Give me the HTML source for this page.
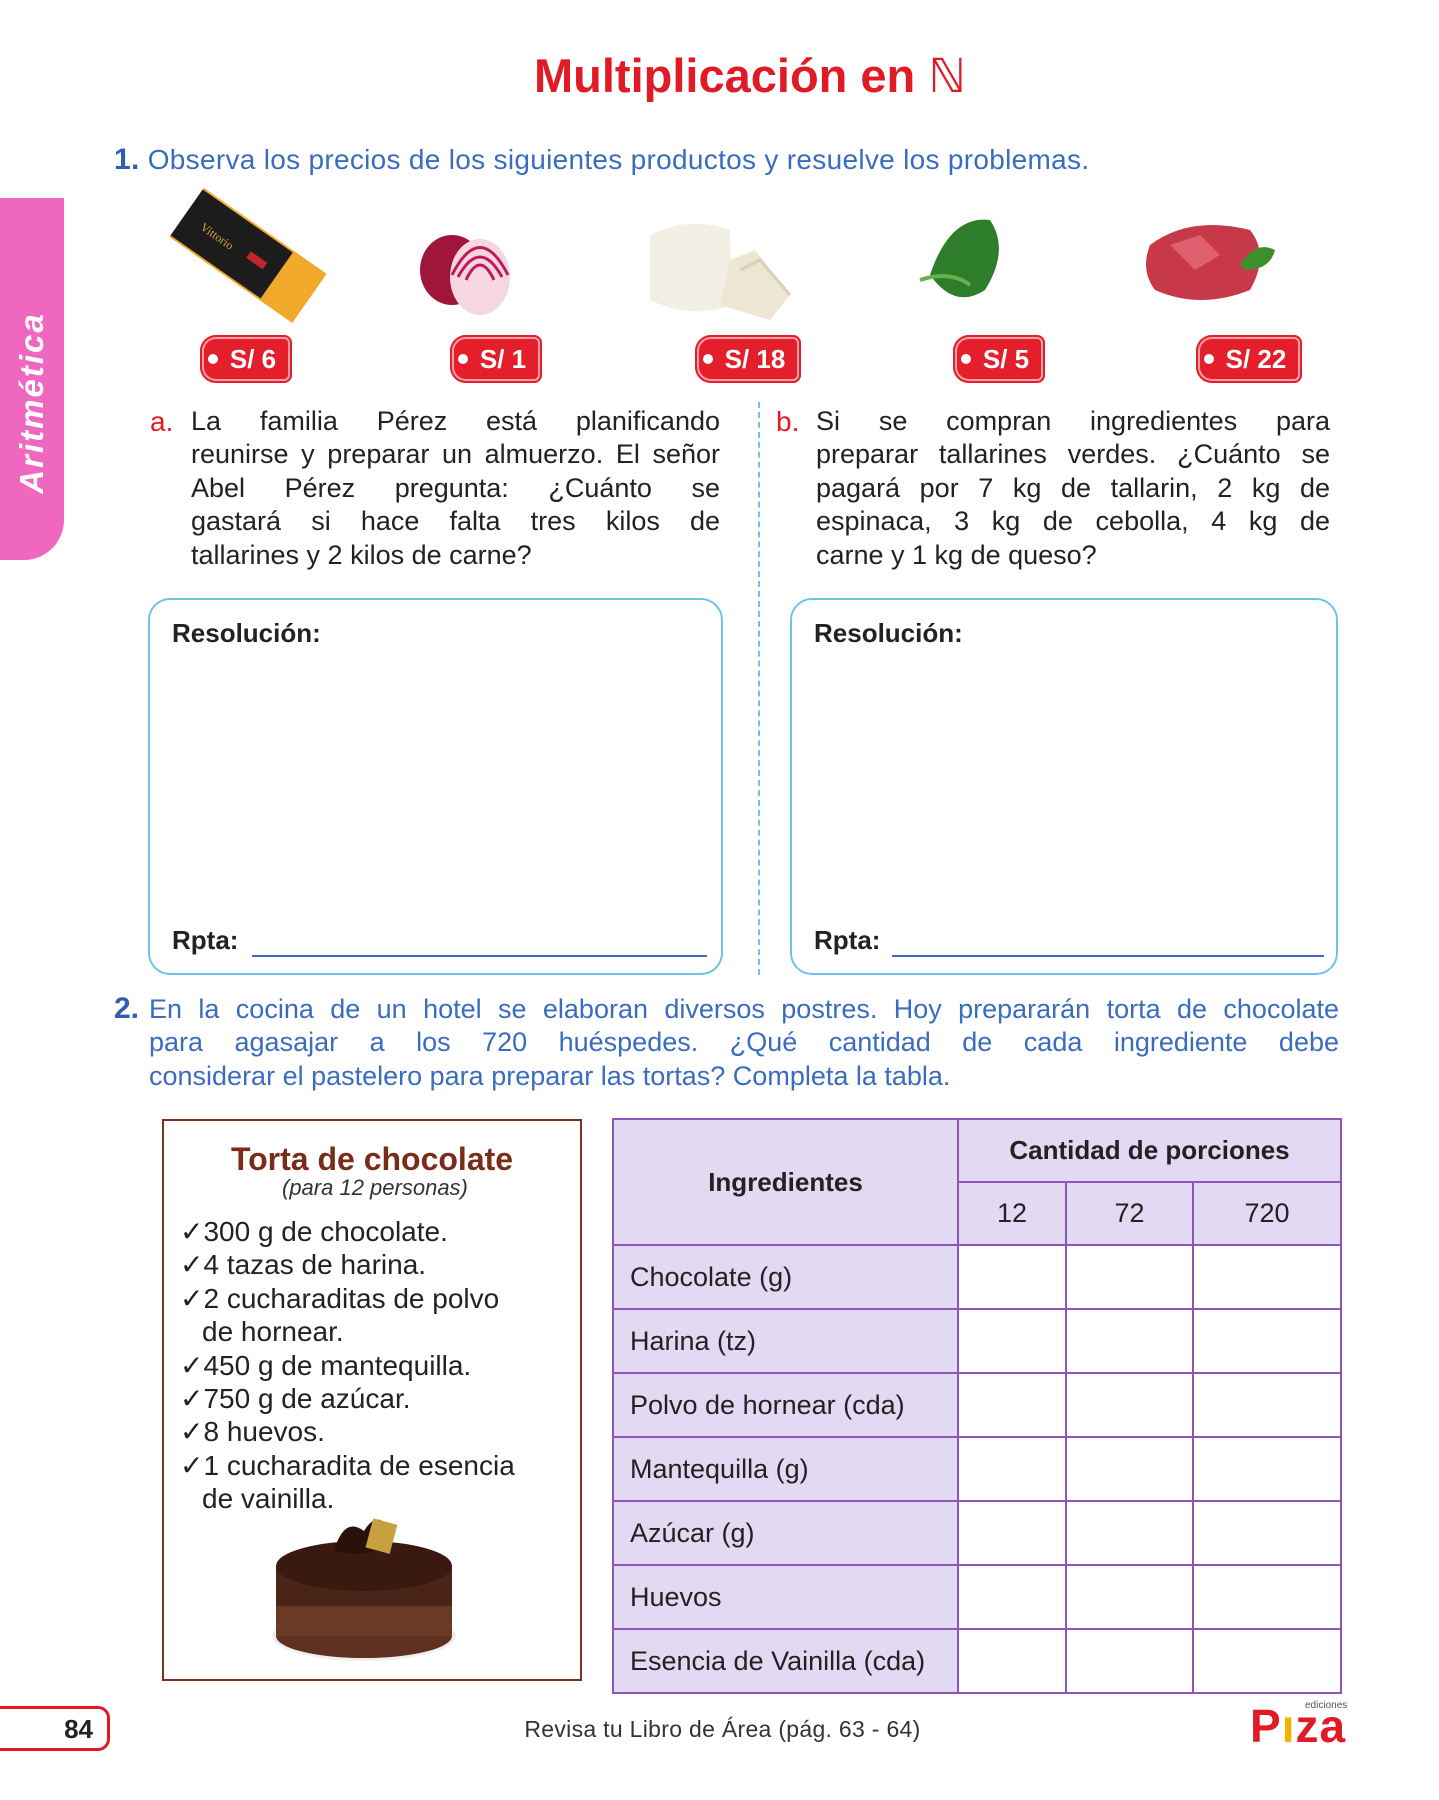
<!DOCTYPE html>
<html><head><meta charset="utf-8">
<style>
*{margin:0;padding:0;box-sizing:border-box}
body{width:1439px;height:1800px;background:#fff;position:relative;overflow:hidden;font-family:"Liberation Sans","DejaVu Sans",sans-serif;color:#222}
.abs{position:absolute}
.title{left:0;width:1500px;text-align:center;top:48px;font-size:47px;font-weight:bold;color:#e11b25}
.blue{color:#3a6cc0}
.num{font-weight:bold;color:#2f5fb3}
.q1{left:114px;top:143px;font-size:28px;letter-spacing:0.3px}
.tab{left:0;top:198px;width:64px;height:362px;background:#f067c0;border-radius:0 0 40px 0}
.tab span{position:absolute;left:32px;top:205px;transform:translate(-50%,-50%) rotate(-90deg);color:#fff;font-size:33px;font-weight:bold;font-style:italic;white-space:nowrap;letter-spacing:2px}
.tag{height:48px;width:92px;background:#e41e2b;border-radius:16px 8px 8px 16px;color:#fff;font-weight:bold;font-size:26px;line-height:48px;text-align:center;padding-left:14px;box-shadow:inset 0 0 0 2px #e41e2b,inset 0 0 0 4px #f7a0a6}
.tag:before{content:"";position:absolute;left:8px;top:19px;width:10px;height:10px;border-radius:50%;background:#fff}
.para{font-size:27px;line-height:33.4px;color:#222}
.para span,.q2 span{display:block;text-align:justify;text-align-last:justify;white-space:nowrap}
.para span.l,.q2 span.l{text-align-last:left}
.lab{font-size:28px;color:#e11b25;position:absolute}
.box{border:2.5px solid #6cc5e6;border-radius:22px;height:377px}
.box b{position:absolute;left:22px;font-size:26px;color:#222}
.line{position:absolute;height:2px;background:#3a6cc0}
.q2{left:149px;top:993px;width:1190px;font-size:27px;line-height:33.4px}
.recipe{left:162px;top:1119px;width:420px;height:562px;border:2.5px solid #7a3422}
.recipe h3{position:absolute;left:0;width:100%;top:20px;text-align:center;color:#7a2c1a;font-size:32px}
.recipe .sub{position:absolute;left:118px;top:54px;font-style:italic;font-size:22px;color:#333}
.recipe ul{position:absolute;left:16px;top:94px;list-style:none;font-size:28px;line-height:33.4px;color:#222;white-space:nowrap}
.recipe li{padding-left:22px;text-indent:-22px}
table{position:absolute;left:612px;top:1118px;border-collapse:collapse;font-size:27px}
td{border:2.5px solid #8d55b8;padding:0}
.h{background:#e2d9f3;}
</style></head><body>
<div class="abs title">Multiplicación en <span style="font-family:'Liberation Serif',serif;font-weight:normal">ℕ</span></div>
<div class="abs q1 blue"><span class="num" style="font-size:30px">1.</span> Observa los precios de los siguientes productos y resuelve los problemas.</div>
<div class="abs tab"><span>Aritmética</span></div>

<svg class="abs" style="left:140px;top:185px" width="1220" height="150">
 <g transform="translate(10,10) rotate(35 80 60)"><rect x="20" y="20" width="150" height="60" fill="#f1a92b"/><rect x="20" y="22" width="110" height="56" fill="#1c1c1c"/><rect x="95" y="45" width="20" height="8" fill="#c0262b"/><text x="40" y="56" fill="#d4a43a" font-size="12" font-family="Liberation Serif">Vittorio</text></g>
 <g><ellipse cx="312" cy="85" rx="32" ry="35" fill="#a0163b"/><ellipse cx="340" cy="92" rx="30" ry="38" fill="#f6d7e1"/><path d="M318 92 q22 -40 44 0 M326 95 q14 -30 28 0 M312 90 q28 -55 56 0" stroke="#c2185b" stroke-width="3" fill="none"/></g>
 <g><path d="M510 50 q40 -20 80 -5 l2 75 q-40 15 -82 -5z" fill="#f2efe4"/><path d="M590 75 l25 -10 l35 45 l-20 25 l-50 -15z" fill="#ece6d3"/><path d="M600 85 l20 -10 l30 35" stroke="#d8d0b8" stroke-width="3" fill="none"/></g>
 <g><path d="M790 90 q20 -60 60 -55 q20 30 -5 70 q-30 20 -55 -15z" fill="#2d7d2a"/><path d="M780 95 q30 -10 50 5" stroke="#6ab04c" stroke-width="4" fill="none"/></g>
 <g><path d="M1010 60 q40 -30 100 -15 q20 25 0 60 q-50 20 -95 0 q-15 -20 -5 -45z" fill="#c73949"/><path d="M1030 60 l30 -10 l20 20 l-25 15z" fill="#e06070"/><path d="M1100 80 q15 -25 35 -15 q-5 20 -30 20z" fill="#3c8f2c"/></g>
</svg>

<div class="abs tag" style="left:200px;top:335px">S/ 6</div>
<div class="abs tag" style="left:450px;top:335px">S/ 1</div>
<div class="abs tag" style="left:695px;top:335px;width:106px">S/ 18</div>
<div class="abs tag" style="left:953px;top:335px">S/ 5</div>
<div class="abs tag" style="left:1196px;top:335px;width:106px">S/ 22</div>

<div class="lab" style="left:150px;top:406px">a.</div>
<div class="abs para" style="left:191px;top:405px;width:529px"><span>La familia Pérez está planificando</span><span>reunirse y preparar un almuerzo. El señor</span><span>Abel Pérez pregunta: ¿Cuánto se</span><span>gastará si hace falta tres kilos de</span><span class="l">tallarines y 2 kilos de carne?</span></div>
<div class="abs" style="left:758px;top:402px;height:573px;border-left:2px dashed #6cc5e6"></div>
<div class="lab" style="left:776px;top:406px">b.</div>
<div class="abs para" style="left:816px;top:405px;width:514px"><span>Si se compran ingredientes para</span><span>preparar tallarines verdes. ¿Cuánto se</span><span>pagará por 7 kg de tallarin, 2 kg de</span><span>espinaca, 3 kg de cebolla, 4 kg de</span><span class="l">carne y 1 kg de queso?</span></div>

<div class="abs box" style="left:148px;top:598px;width:575px"><b style="top:18px">Resolución:</b><b style="top:325px">Rpta:</b><div class="line" style="left:102px;top:355px;width:455px"></div></div>
<div class="abs box" style="left:790px;top:598px;width:548px"><b style="top:18px">Resolución:</b><b style="top:325px">Rpta:</b><div class="line" style="left:100px;top:355px;width:432px"></div></div>

<div class="abs num" style="left:114px;top:992px;font-size:30px">2.</div>
<div class="abs q2 blue"><span>En la cocina de un hotel se elaboran diversos postres. Hoy prepararán torta de chocolate</span><span>para agasajar a los 720 huéspedes. ¿Qué cantidad de cada ingrediente debe</span><span class="l">considerar el pastelero para preparar las tortas? Completa la tabla.</span></div>

<div class="abs recipe">
<h3>Torta de chocolate</h3>
<div class="sub">(para 12 personas)</div>
<ul>
<li>✓300 g de chocolate.</li>
<li>✓4 tazas de harina.</li>
<li>✓2 cucharaditas de polvo<br>de hornear.</li>
<li>✓450 g de mantequilla.</li>
<li>✓750 g de azúcar.</li>
<li>✓8 huevos.</li>
<li>✓1 cucharadita de esencia<br>de vainilla.</li>
</ul>
<svg style="position:absolute;left:100px;top:390px" width="200" height="160">
 <ellipse cx="100" cy="125" rx="92" ry="25" fill="#eee"/>
 <rect x="12" y="55" width="176" height="70" fill="#4a2416"/>
 <ellipse cx="100" cy="125" rx="88" ry="22" fill="#5e3020"/>
 <rect x="12" y="95" width="176" height="30" fill="#6b3a24"/>
 <ellipse cx="100" cy="55" rx="88" ry="25" fill="#3a1a10"/>
 <path d="M70 40 q10 -35 30 -20 q15 -25 30 5 q-20 25 -60 15z" fill="#2a120a"/>
 <rect x="105" y="10" width="25" height="30" fill="#c8a040" transform="rotate(15 117 25)"/>
</svg>
</div>

<table>
<tr style="height:63px"><td class="h" rowspan="2" style="width:345px;text-align:center;font-weight:bold;font-size:26px">Ingredientes</td><td class="h" colspan="3" style="text-align:center;font-weight:bold;font-size:26px">Cantidad de porciones</td></tr>
<tr style="height:63px"><td class="h" style="width:108px;text-align:center">12</td><td class="h" style="width:127px;text-align:center">72</td><td class="h" style="width:148px;text-align:center">720</td></tr>
<tr style="height:64px"><td class="h" style="padding-left:16px">Chocolate (g)</td><td></td><td></td><td></td></tr>
<tr style="height:64px"><td class="h" style="padding-left:16px">Harina (tz)</td><td></td><td></td><td></td></tr>
<tr style="height:64px"><td class="h" style="padding-left:16px">Polvo de hornear (cda)</td><td></td><td></td><td></td></tr>
<tr style="height:64px"><td class="h" style="padding-left:16px">Mantequilla (g)</td><td></td><td></td><td></td></tr>
<tr style="height:64px"><td class="h" style="padding-left:16px">Azúcar (g)</td><td></td><td></td><td></td></tr>
<tr style="height:64px"><td class="h" style="padding-left:16px">Huevos</td><td></td><td></td><td></td></tr>
<tr style="height:64px"><td class="h" style="padding-left:16px">Esencia de Vainilla (cda)</td><td></td><td></td><td></td></tr>
</table>

<div class="abs" style="left:-10px;top:1706px;width:120px;height:45px;border:3px solid #e11b25;border-radius:0 12px 12px 0;text-align:right;padding-right:14px;font-weight:bold;font-size:26px;line-height:40px">84</div>
<div class="abs" style="left:0;width:1439px;text-align:center;top:1716px;font-size:23px;color:#333;padding-left:6px;letter-spacing:0.3px">Revisa tu Libro de Área (pág. 63 - 64)</div>
<div class="abs" style="left:1250px;top:1703px;font-size:46px;font-weight:bold;color:#e11b25;letter-spacing:1px;line-height:46px">P<span style="color:#f2b400">ı</span>za</div>
<div class="abs" style="left:1305px;top:1700px;font-size:10px;color:#555">ediciones</div>
</body></html>
